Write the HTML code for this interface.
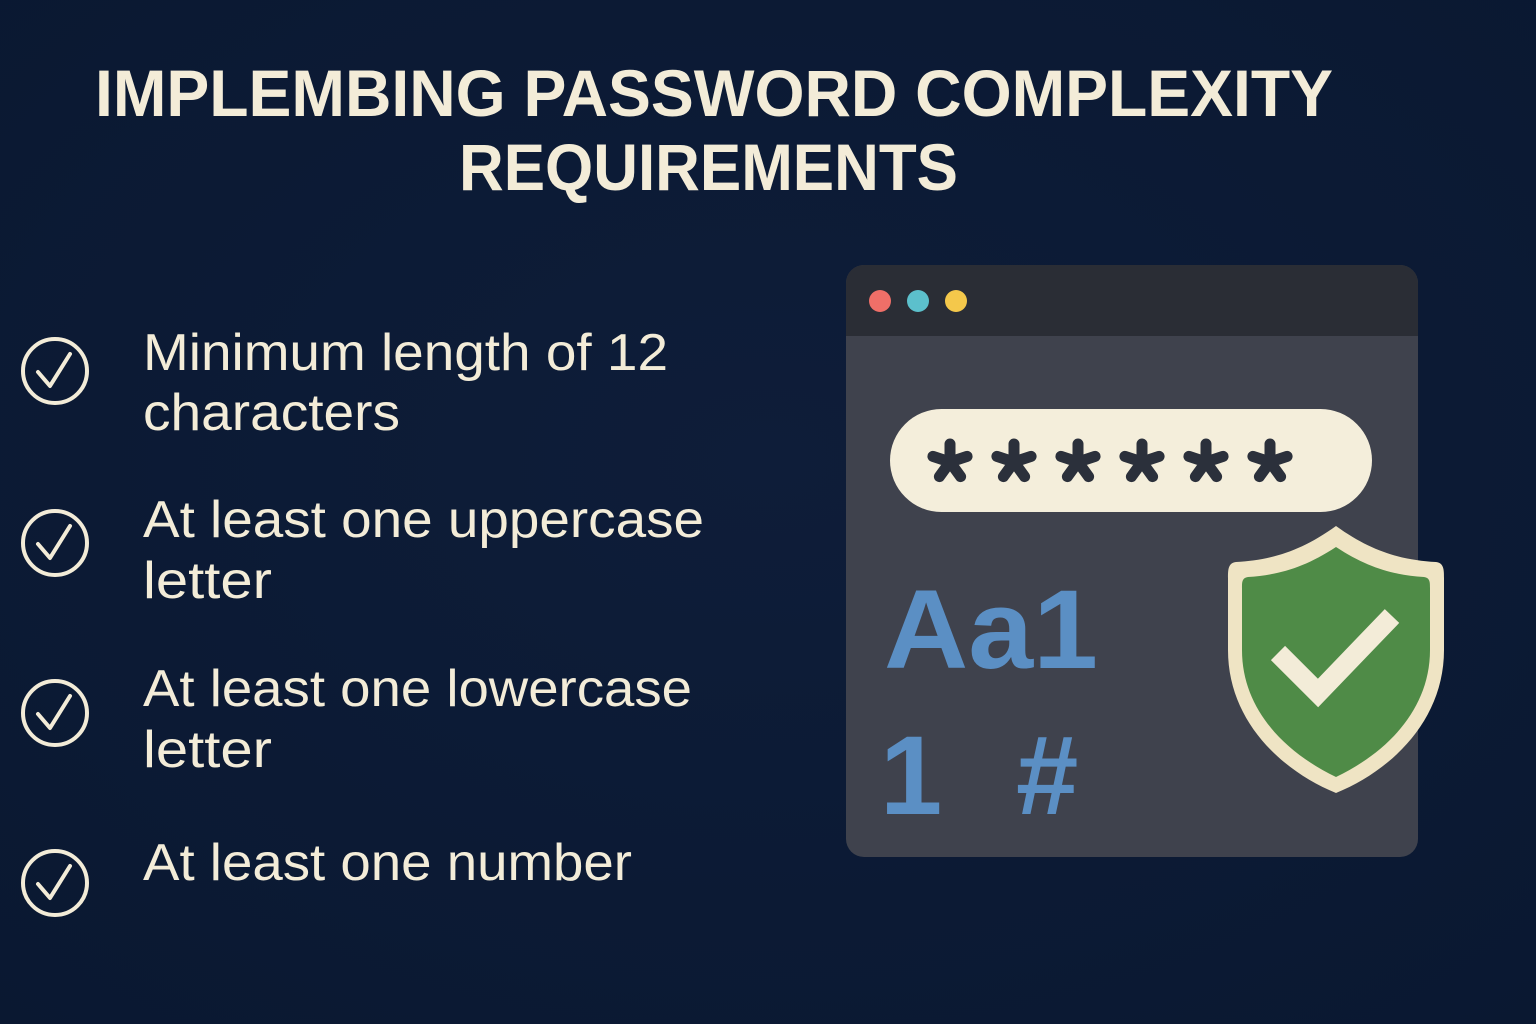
<!DOCTYPE html>
<html><head><meta charset="utf-8"><style>
html,body{margin:0;padding:0;width:1536px;height:1024px;overflow:hidden;background:#0c1b35;}
svg{display:block}
</style></head><body>
<svg width="1536" height="1024" viewBox="0 0 1536 1024" xmlns="http://www.w3.org/2000/svg">
<defs>
<radialGradient id="bg" cx="50%" cy="45%" r="75%">
<stop offset="0" stop-color="#0e1d39"/><stop offset="1" stop-color="#0a1831"/>
</radialGradient>
<g id="ast"><path d="M0 -18 V0 M0 0 L17.1 -5.6 M0 0 L10.6 14.6 M0 0 L-10.6 14.6 M0 0 L-17.1 -5.6" fill="none" stroke="#2b303b" stroke-width="11" stroke-linecap="round"/></g>
</defs>
<rect width="1536" height="1024" fill="url(#bg)"/>
<g font-family="Liberation Sans, sans-serif" fill="#f3ecd8">
<text x="95" y="116" font-size="66" font-weight="bold" textLength="1238" lengthAdjust="spacingAndGlyphs">IMPLEMBING PASSWORD COMPLEXITY</text>
<text x="459" y="190" font-size="66" font-weight="bold" textLength="499" lengthAdjust="spacingAndGlyphs">REQUIREMENTS</text>
<g font-size="52">
<text x="143" y="370" textLength="525" lengthAdjust="spacingAndGlyphs">Minimum length of 12</text>
<text x="143" y="430" textLength="257" lengthAdjust="spacingAndGlyphs">characters</text>
<text x="143" y="537" textLength="561" lengthAdjust="spacingAndGlyphs">At least one uppercase</text>
<text x="143" y="598" textLength="129" lengthAdjust="spacingAndGlyphs">letter</text>
<text x="143" y="706" textLength="549" lengthAdjust="spacingAndGlyphs">At least one lowercase</text>
<text x="143" y="767" textLength="129" lengthAdjust="spacingAndGlyphs">letter</text>
<text x="143" y="880" textLength="489" lengthAdjust="spacingAndGlyphs">At least one number</text>
</g>
</g>
<g fill="none" stroke="#f3ecd8" stroke-width="4" stroke-linecap="round" stroke-linejoin="round">
<circle cx="55" cy="371" r="32"/><path d="M38 372 L50 386 L70 354"/>
<circle cx="55" cy="543" r="32"/><path d="M38 544 L50 558 L70 526"/>
<circle cx="55" cy="713" r="32"/><path d="M38 714 L50 728 L70 696"/>
<circle cx="55" cy="883" r="32"/><path d="M38 884 L50 898 L70 866"/>
</g>
<rect x="846" y="265" width="572" height="592" rx="18" fill="#3f424d"/>
<path d="M864 265 H1400 A18 18 0 0 1 1418 283 V336 H846 V283 A18 18 0 0 1 864 265Z" fill="#2a2d35"/>
<circle cx="880" cy="301" r="11" fill="#ef6f68"/>
<circle cx="918" cy="301" r="11" fill="#5cc0cc"/>
<circle cx="956" cy="301" r="11" fill="#f4c84b"/>
<rect x="890" y="409" width="482" height="103" rx="51.5" fill="#f4eedb"/>
<use href="#ast" x="950" y="462"/><use href="#ast" x="1014" y="462"/><use href="#ast" x="1078" y="462"/>
<use href="#ast" x="1142" y="462"/><use href="#ast" x="1206" y="462"/><use href="#ast" x="1270" y="462"/>
<g font-family="Liberation Sans, sans-serif" font-weight="bold" font-size="112" fill="#5b8fc4">
<text x="884" y="668" textLength="214" lengthAdjust="spacingAndGlyphs">Aa1</text>
<text x="880" y="814">1</text>
<text x="1016" y="814">#</text>
</g>
<path d="M1336 526 C1300 552 1270 560 1236 562 C1228 563 1228 570 1228 578 V650 C1228 720 1280 770 1336 793 C1392 770 1444 720 1444 650 V578 C1444 570 1444 563 1436 562 C1402 560 1372 552 1336 526Z" fill="#efe4c4"/>
<path d="M1336 547 C1304 568 1278 575 1248 577 C1242 578 1242 582 1242 588 V650 C1242 710 1286 753 1336 777 C1386 753 1430 710 1430 650 V588 C1430 582 1430 578 1424 577 C1394 575 1368 568 1336 547Z" fill="#4f8b47"/>
<path d="M1278 653 L1318 693 L1392 616" fill="none" stroke="#f3ecd8" stroke-width="20" stroke-linecap="butt"/>
</svg>
</body></html>
